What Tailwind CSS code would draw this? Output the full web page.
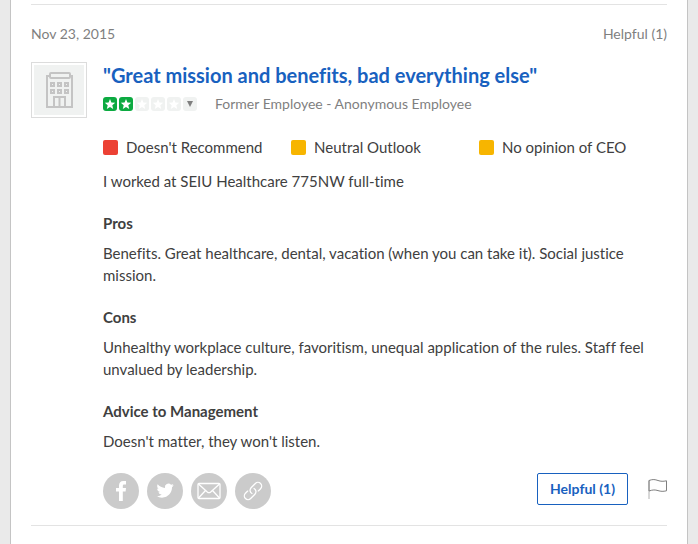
<!DOCTYPE html>
<html lang="en">
  <head>
    <meta charset="UTF-8" />
    <meta name="viewport" content="width=device-width, initial-scale=1.0" />
    <script src="https://cdn.jsdelivr.net/npm/@tailwindcss/browser@4"></script>
    <title>Company Reviews</title>
  </head>
  <body class="bg-[#eaeaea] font-['Lato',sans-serif] text-[15px] leading-[22px] text-[#404040] [font-variant-ligatures:none]">
    <main class="mx-2.5 min-h-screen border-x border-[#c4c4c4] bg-white px-5 pt-1">
      <article class="border-y border-[#e3e3e3] pb-4">
        <div class="flex justify-between py-[18px] text-sm leading-[21px] text-[#7f7f7f]">
          <time datetime="2015-11-23">Nov 23, 2015</time>
          <span>Helpful (1)</span>
        </div>

        <div class="flex gap-4">
          <!-- employer logo placeholder -->
          <div class="size-14 shrink-0 border border-[#dcdcdc] p-0.5">
            <svg class="size-full bg-[#f0f2f1]" viewBox="0 0 50 50" fill="none" stroke="#c4c4c4" stroke-width="2">
              <path d="M15 11h-2v31h25V11h-2" />
              <rect x="16" y="8" width="20" height="5" rx="1" />
              <path d="M17 18h3v3h-3zM24 18h3v3h-3zM31 18h3v3h-3zM17 25h3v3h-3zM24 25h3v3h-3zM31 25h3v3h-3z" />
              <path d="M20 42V32h11v10M25.500 32v10" />
            </svg>
          </div>

          <div class="min-w-0 grow">
            <h2 class="text-xl leading-[26px] font-bold text-[#1861bf]">
              <a href="#">"Great mission and benefits, bad everything else"</a>
            </h2>

            <div class="mt-[5px] flex items-center text-sm leading-[22px] text-[#7f7f7f]">
              <div class="flex gap-0.5" role="img" aria-label="2 out of 5 stars">
                <svg class="size-3.5 rounded-[3px] bg-[#0caa41]" viewBox="0 0 14 14" fill="#fff"><path d="M7 2l1.400 3.500 3.800.3-2.900 2.400.9 3.700L7 9.900l-3.200 2 .9-3.700-2.900-2.400 3.800-.3z" /></svg>
                <svg class="size-3.5 rounded-[3px] bg-[#0caa41]" viewBox="0 0 14 14" fill="#fff"><path d="M7 2l1.400 3.500 3.800.3-2.900 2.400.9 3.700L7 9.900l-3.200 2 .9-3.700-2.900-2.400 3.800-.3z" /></svg>
                <svg class="size-3.5 rounded-[3px] bg-[#f0f2f1]" viewBox="0 0 14 14" fill="#fff"><path d="M7 2l1.400 3.500 3.800.3-2.900 2.400.9 3.700L7 9.900l-3.200 2 .9-3.700-2.900-2.400 3.800-.3z" /></svg>
                <svg class="size-3.5 rounded-[3px] bg-[#f0f2f1]" viewBox="0 0 14 14" fill="#fff"><path d="M7 2l1.400 3.500 3.800.3-2.900 2.400.9 3.700L7 9.900l-3.200 2 .9-3.700-2.900-2.400 3.800-.3z" /></svg>
                <svg class="size-3.5 rounded-[3px] bg-[#f0f2f1]" viewBox="0 0 14 14" fill="#fff"><path d="M7 2l1.400 3.500 3.800.3-2.900 2.400.9 3.700L7 9.900l-3.200 2 .9-3.700-2.900-2.400 3.800-.3z" /></svg>
              </div>
              <button class="ml-0.5 size-3.5 rounded-[3px] bg-[#f0f2f1]" aria-label="Rating details">
                <svg class="size-3.5" viewBox="0 0 14 14" fill="#7f7f7f"><path d="M4 4h6L7 10z" /></svg>
              </button>
              <span class="ml-[18px]">Former Employee - Anonymous Employee</span>
            </div>

            <div class="mt-[21px] grid grid-cols-3">
              <div class="flex items-center gap-2"><i class="size-[15px] rounded-xs bg-[#ec4134]"></i>Doesn't Recommend</div>
              <div class="flex items-center gap-2"><i class="size-[15px] rounded-xs bg-[#f7b500]"></i>Neutral Outlook</div>
              <div class="flex items-center gap-2"><i class="size-[15px] rounded-xs bg-[#f7b500]"></i>No opinion of CEO</div>
            </div>

            <p class="mt-3">I worked at SEIU Healthcare 775NW full-time</p>

            <h3 class="mt-5 font-bold">Pros</h3>
            <p class="mt-2">Benefits. Great healthcare, dental, vacation (when you can take it). Social justice mission.</p>

            <h3 class="mt-5 font-bold">Cons</h3>
            <p class="mt-2">Unhealthy workplace culture, favoritism, unequal application of the rules. Staff feel unvalued by leadership.</p>

            <h3 class="mt-5 font-bold">Advice to Management</h3>
            <p class="mt-2">Doesn't matter, they won't listen.</p>

            <div class="mt-[21px] flex items-start justify-between">
              <div class="flex gap-2">
                <button class="size-9 rounded-full bg-[#cbcbcb]" aria-label="Share on Facebook">
                  <svg class="size-9" viewBox="0 0 36 36" fill="#fff"><path d="M16 28V18.500h-3V15h3v-2.500C16 9.800 17.600 8 20.300 8H23v3.500h-1.700c-1.200 0-1.500.6-1.500 1.600V15H23l-.4 3.500h-2.800V28z" /></svg>
                </button>
                <button class="size-9 rounded-full bg-[#cbcbcb]" aria-label="Share on Twitter">
                  <svg class="size-9" viewBox="0 0 36 36" fill="#fff"><path transform="translate(9.500 9) scale(.72)" d="M23.950 4.570a10 10 0 0 1-2.820.77 4.960 4.960 0 0 0 2.160-2.720c-.95.55-2 .95-3.130 1.180a4.920 4.920 0 0 0-8.380 4.480C7.690 8.090 4.070 6.130 1.640 3.160a4.820 4.820 0 0 0-.67 2.480c0 1.710.87 3.210 2.190 4.100a4.900 4.900 0 0 1-2.230-.62v.06a4.920 4.920 0 0 0 3.950 4.830 5 5 0 0 1-2.210.08 4.940 4.940 0 0 0 4.600 3.420A9.870 9.870 0 0 1 0 19.540a14 14 0 0 0 7.550 2.210c9.050 0 14-7.500 14-13.980 0-.21 0-.42-.02-.63a9.940 9.940 0 0 0 2.460-2.550z" /></svg>
                </button>
                <button class="size-9 rounded-full bg-[#cbcbcb]" aria-label="Share by email">
                  <svg class="size-9" viewBox="0 0 36 36" fill="none" stroke="#fff" stroke-width="1.300" stroke-linejoin="round"><rect x="7" y="10.500" width="22" height="15" rx="1" /><path d="M7.500 11l8.800 8q1.700 1.400 3.400 0l8.800-8M7.500 25l7-7.500M28.500 25l-7-7.500" /></svg>
                </button>
                <button class="size-9 rounded-full bg-[#cbcbcb]" aria-label="Copy link">
                  <svg class="size-9" viewBox="0 0 36 36" fill="none" stroke="#fff" stroke-width="1.300" stroke-linecap="round">
                    <g transform="translate(18 18) rotate(-45)">
                      <path d="M-3.800 -3.700H-7a3.700 3.700 0 0 0 0 7.400H-1a3.700 3.700 0 0 0 3.500-4.700" />
                      <path d="M3.800 3.700H7a3.700 3.700 0 0 0 0-7.400H1a3.700 3.700 0 0 0-3.500 4.700" />
                    </g>
                  </svg>
                </button>
              </div>
              <div class="flex items-center gap-5">
                <button class="h-8 rounded-xs border border-[#1861bf] px-3 text-sm font-bold text-[#1861bf]">Helpful (1)</button>
                <button aria-label="Flag this review">
                  <svg class="h-5 w-[19px]" viewBox="0 0 19 20" fill="none" stroke="#7f7f7f"><path d="M1 20V1.500" stroke="#b0b0b0" /><path d="M1 12V1.500c4-1.500 6-1 9 0s5 1 8.500.3v10c-3.500.8-5.500.7-8.500-.2s-5-1-9 .4" /></svg>
                </button>
              </div>
            </div>
          </div>
        </div>
      </article>
    </main>
  </body>
</html>
